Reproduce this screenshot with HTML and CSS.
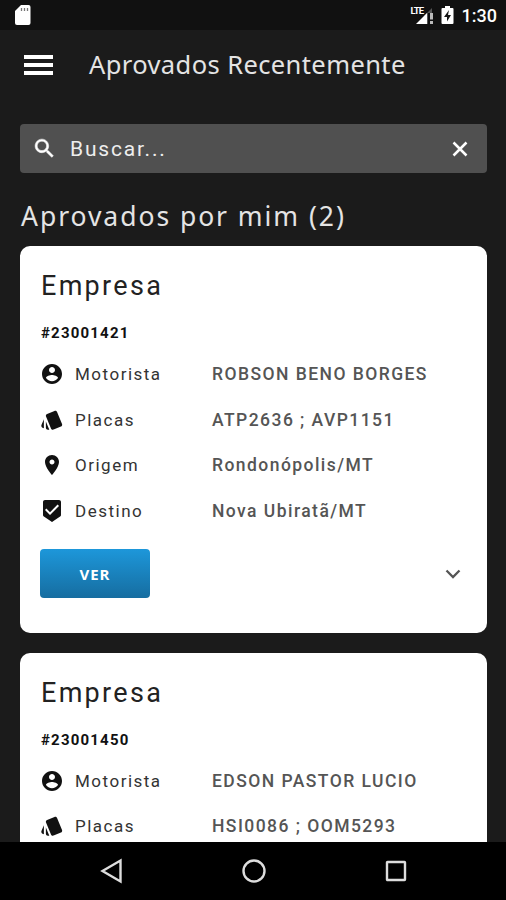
FILE: index.html
```
<!DOCTYPE html>
<html lang="pt-BR">

<head>
    <meta charset="UTF-8">
    <meta name="viewport" content="width=device-width, initial-scale=1.0">
    <title>Aprovados Recentemente</title>
    <link rel="stylesheet" href="styles.css">
</head>

<body>
    <!-- Shared icons -->
    <svg class="sprite" width="0" height="0">
        <symbol id="icon-account" viewBox="0 0 24 24">
            <path d="M12 2C6.48 2 2 6.48 2 12s4.48 10 10 10 10-4.48 10-10S17.52 2 12 2zm0 3c1.66 0 3 1.34 3 3s-1.34 3-3 3-3-1.34-3-3 1.34-3 3-3zm0 14.2c-2.5 0-4.71-1.28-6-3.22.03-1.99 4-3.08 6-3.08 1.99 0 5.97 1.09 6 3.08-1.29 1.94-3.5 3.22-6 3.22z"/>
        </symbol>
        <symbol id="icon-style" viewBox="0 0 24 24">
            <path d="M2.53 19.65l1.34.56v-9.03l-2.43 5.86c-.41 1.02.08 2.19 1.09 2.61zm19.5-3.7L17.07 3.98c-.31-.75-1.04-1.21-1.81-1.23-.26 0-.53.04-.79.15L7.1 5.95c-.75.31-1.21 1.03-1.23 1.8-.01.27.04.54.15.8l4.96 11.97c.31.76 1.05 1.22 1.83 1.23.26 0 .52-.05.77-.15l7.36-3.05c1.02-.42 1.51-1.59 1.09-2.6zM5.88 19.75c0 1.1.9 2 2 2h1.45l-3.45-8.34v6.34z"/>
        </symbol>
        <symbol id="icon-place" viewBox="0 0 24 24">
            <path d="M12 2C8.13 2 5 5.13 5 9c0 5.25 7 13 7 13s7-7.75 7-13c0-3.87-3.13-7-7-7zm0 9.5c-1.38 0-2.5-1.12-2.5-2.5s1.12-2.5 2.5-2.5 2.5 1.12 2.5 2.5-1.12 2.5-2.5 2.5z"/>
        </symbol>
        <symbol id="icon-beenhere" viewBox="0 0 24 24">
            <path d="M19 1H5c-1.1 0-1.99.9-1.99 2L3 15.93c0 .69.35 1.3.88 1.66L12 23l8.11-5.41c.53-.36.88-.97.88-1.66L21 3c0-1.1-.9-2-2-2zm-9 15l-5-5 1.41-1.41L10 13.17l7.59-7.59L19 7l-9 9z"/>
        </symbol>
    </svg>

    <div class="status-bar">
        <svg width="17" height="20" viewBox="0 0 17 20">
            <path d="M7 0h7.500a2 2 0 0 1 2 2v16a2 2 0 0 1-2 2H3a2 2 0 0 1-2-2V6z" fill="#fff"/>
            <path d="M7.500 3v3M10.500 3v3M13.500 3v3" stroke="#777" stroke-width="1.300"/>
        </svg>
        <div class="status-right">
            <svg width="25" height="20" viewBox="0 0 25 20">
                <path d="M14 11l8-8v5h-4v11h-4z" fill="#555"/>
                <path d="M6 19L17 8v11z" fill="#fff"/>
                <text class="lte" x="0.500" y="9">LTE</text>
                <path d="M20 8h3v6.500h-3zM20 16h3v3h-3z" fill="#bbb"/>
            </svg>
            <svg class="battery" width="13" height="20" viewBox="0 0 13 20">
                <path d="M4 1h5v2h2.500q1 0 1 1v14q0 1-1 1h-10q-1 0-1-1V4q0-1 1-1H4z" fill="#fff"/>
                <path d="M8 5L3 12h3v4.500L10 10H7z" fill="#151515"/>
            </svg>
            <span class="clock">1:30</span>
        </div>
    </div>

    <header class="app-bar">
        <div class="menu"><i></i><i></i><i></i></div>
        <h1>Aprovados Recentemente</h1>
    </header>

    <main>
        <div class="search">
            <svg width="25" height="25" viewBox="0 0 24 24" fill="#fff" stroke="#fff" stroke-width="0.5">
                <path d="M15.500 14h-.79l-.28-.27C15.410 12.590 16 11.110 16 9.500 16 5.910 13.090 3 9.500 3S3 5.910 3 9.500 5.910 16 9.500 16c1.610 0 3.090-.59 4.230-1.570l.27.28v.79l5 4.990L20.490 19l-4.990-5zm-6 0C7.010 14 5 11.990 5 9.500S7.010 5 9.500 5 14 7.010 14 9.500 11.990 14 9.500 14z"/>
            </svg>
            <span class="placeholder">Buscar...</span>
            <svg width="24" height="24" viewBox="0 0 24 24">
                <path d="M5.500 5.500l13 13M18.500 5.500l-13 13" stroke="#fff" stroke-width="2.500"/>
            </svg>
        </div>

        <h2>Aprovados por mim (2)</h2>

        <div class="card">
            <h3>Empresa</h3>
            <p class="code">#23001421</p>
            <div class="row">
                <svg class="icon"><use href="#icon-account"/></svg>
                <span class="label">Motorista</span>
                <span class="value">ROBSON BENO BORGES</span>
            </div>
            <div class="row">
                <svg class="icon"><use href="#icon-style"/></svg>
                <span class="label">Placas</span>
                <span class="value">ATP2636 ; AVP1151</span>
            </div>
            <div class="row">
                <svg class="icon"><use href="#icon-place"/></svg>
                <span class="label">Origem</span>
                <span class="value">Rondonópolis/MT</span>
            </div>
            <div class="row">
                <svg class="icon"><use href="#icon-beenhere"/></svg>
                <span class="label">Destino</span>
                <span class="value">Nova Ubiratã/MT</span>
            </div>
            <div class="actions">
                <button>VER</button>
                <svg width="24" height="24" viewBox="0 0 24 24">
                    <path d="M5.500 8.500l6.500 6.500 6.500-6.500" fill="none" stroke="#555" stroke-width="2.300"/>
                </svg>
            </div>
        </div>

        <div class="card">
            <h3>Empresa</h3>
            <p class="code">#23001450</p>
            <div class="row">
                <svg class="icon"><use href="#icon-account"/></svg>
                <span class="label">Motorista</span>
                <span class="value">EDSON PASTOR LUCIO</span>
            </div>
            <div class="row">
                <svg class="icon"><use href="#icon-style"/></svg>
                <span class="label">Placas</span>
                <span class="value">HSI0086 ; OOM5293</span>
            </div>
        </div>
    </main>

    <!-- Android navigation -->
    <nav class="nav-bar">
        <svg width="26" height="26" viewBox="0 0 26 26">
            <path d="M21.500 2.500v21L3.500 13z"/>
        </svg>
        <svg width="26" height="26" viewBox="0 0 26 26">
            <circle cx="13" cy="13" r="10.500"/>
        </svg>
        <svg width="26" height="26" viewBox="0 0 26 26">
            <rect x="4" y="4" width="18" height="18" rx="0.500"/>
        </svg>
    </nav>
</body>

</html>
```

FILE: styles.css
```
* {
    margin: 0;
    padding: 0;
    box-sizing: border-box;
}

body {
    background-color: #1b1b1b;
    color: #fff;
    font-family: Roboto, sans-serif;
    height: 900px;
    display: flex;
    flex-direction: column;
    overflow: hidden;
}

.sprite {
    display: none;
}

.status-bar {
    height: 30px;
    flex-shrink: 0;
    padding: 0 9px 0 14px;
    background-color: #111;
    display: flex;
    justify-content: space-between;
    align-items: center;
}

.status-right {
    display: flex;
    align-items: center;
}

.lte {
    font-size: 9.5px;
    font-weight: 700;
    letter-spacing: -0.8px;
    fill: #fff;
}

.battery {
    margin-left: 6px;
}

.clock {
    margin-left: 8px;
    font-size: 18px;
    font-weight: 500;
    line-height: 30px;
    padding-top: 2px;
}

.app-bar {
    height: 70px;
    flex-shrink: 0;
    padding-left: 24px;
    display: flex;
    align-items: center;
}

.menu {
    width: 29px;
    display: flex;
    flex-direction: column;
    gap: 4px;
}

.menu i {
    height: 4px;
    background-color: #fff;
}

h1 {
    margin-left: 36px;
    padding-bottom: 2px;
    font-family: "Noto Sans", sans-serif;
    font-size: 25.5px;
    font-weight: 400;
    letter-spacing: 0.4px;
    color: #e4e4e4;
    white-space: nowrap;
}

main {
    flex: 1;
    min-height: 0;
    padding: 24px 19px 0 20px;
    overflow: hidden;
}

.search {
    height: 49px;
    padding: 0 15px 0 12px;
    background-color: #505050;
    border-radius: 4px;
    display: flex;
    align-items: center;
}

.placeholder {
    flex: 1;
    margin-left: 13px;
    font-size: 21px;
    letter-spacing: 1.8px;
    color: #eee;
}

h2 {
    height: 73px;
    padding: 25px 0 0 1px;
    font-family: "Noto Sans", sans-serif;
    font-size: 26.5px;
    font-weight: 400;
    line-height: 36px;
    letter-spacing: 1.95px;
    color: #e4e4e4;
    white-space: nowrap;
}

.card {
    height: 387px;
    margin-bottom: 19.5px;
    padding: 21px 20px 0;
    background-color: #fff;
    border-radius: 10px;
    color: #222;
}

h3 {
    padding-left: 1px;
    font-size: 27px;
    font-weight: 400;
    line-height: 38px;
    letter-spacing: 2.3px;
}

.code {
    margin: 18px 0 8.5px 1px;
    font-size: 15px;
    font-weight: 700;
    line-height: 20px;
    letter-spacing: 1.2px;
    color: #111;
}

.row {
    height: 45.5px;
    display: flex;
    align-items: center;
}

.icon {
    width: 24px;
    height: 24px;
    fill: #111;
}

.label {
    width: 137px;
    margin-left: 11px;
    font-size: 17px;
    letter-spacing: 1.5px;
    color: #333;
}

.value {
    font-size: 17.5px;
    font-weight: 500;
    letter-spacing: 1.45px;
    color: #555;
    white-space: nowrap;
}

.actions {
    margin-top: 15.5px;
    padding-right: 2px;
    display: flex;
    justify-content: space-between;
    align-items: center;
}

button {
    width: 110px;
    height: 49px;
    background: linear-gradient(#1d97da, #166da0);
    border: none;
    border-radius: 4px;
    color: #fff;
    font-family: "Open Sans", sans-serif;
    font-size: 15px;
    font-weight: 700;
    letter-spacing: 1px;
}

.nav-bar {
    height: 58px;
    flex-shrink: 0;
    padding: 0 39px 0 41px;
    background-color: #000;
    display: flex;
    justify-content: space-around;
    align-items: center;
}

.nav-bar svg {
    fill: none;
    stroke: #ddd;
    stroke-width: 2.4;
}
```
